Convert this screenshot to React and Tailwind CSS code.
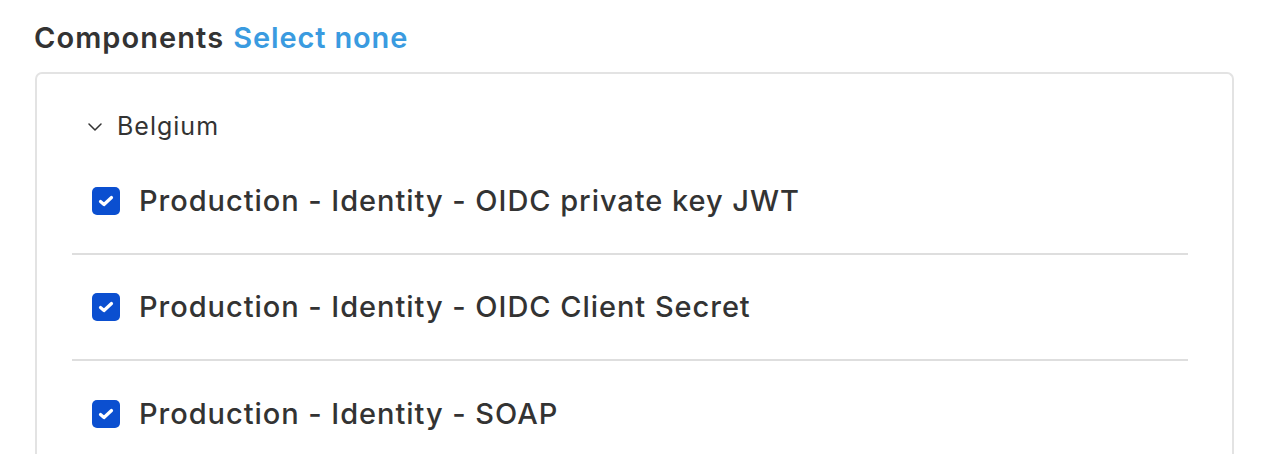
import React from 'react';

const components = [
  'Production - Identity - OIDC private key JWT',
  'Production - Identity - OIDC Client Secret',
  'Production - Identity - SOAP',
];

const CheckBox = () => (
  <span className="flex h-[28px] w-[28px] flex-shrink-0 items-center justify-center rounded-[5px] bg-[#0b4fd0]">
    <svg width="16" height="12" viewBox="0 0 16 12" fill="none">
      <path d="M2.5 6.5 L6 9.5 L13.5 2.5" stroke="white" strokeWidth="3.2" strokeLinecap="round" strokeLinejoin="round" />
    </svg>
  </span>
);

const App = () => {
  return (
    <div className="min-h-[454px] bg-white pl-[34px] pt-[18px] text-[#333333]" style={{ fontFamily: 'Inter, "Liberation Sans", sans-serif' }}>
      <h2 className="mb-[14px] flex items-center gap-[9px] text-[29px] font-semibold leading-[40px] tracking-[0.037em]">
        <span>Components</span>
        <button className="tracking-[0.03em] text-[#3a9be0]">Select none</button>
      </h2>
      <div className="ml-px w-[1199px] rounded-t-[7px] border-2 border-b-0 border-[#e3e3e3] pt-[33px]">
        <div className="flex h-[40px] items-center gap-[15px] pl-[51px] text-[25px] tracking-[0.04em]">
          <svg width="14" height="8" viewBox="0 0 14 8" fill="none">
            <path d="M1 1 L7 7 L13 1" stroke="#333" strokeWidth="1.5" strokeLinecap="round" strokeLinejoin="round" />
          </svg>
          <span>Belgium</span>
        </div>
        <ul className="ml-[35px] mr-[44px] mt-[2px]">
          {components.map((name) => (
            <li key={name} className="flex h-[106px] items-center gap-[19px] border-b-2 border-[#dedede] pl-[20px] last:border-b-0">
              <CheckBox />
              <span className="text-[29px] font-medium tracking-[0.033em]">{name}</span>
            </li>
          ))}
        </ul>
      </div>
    </div>
  );
};

export default App;
